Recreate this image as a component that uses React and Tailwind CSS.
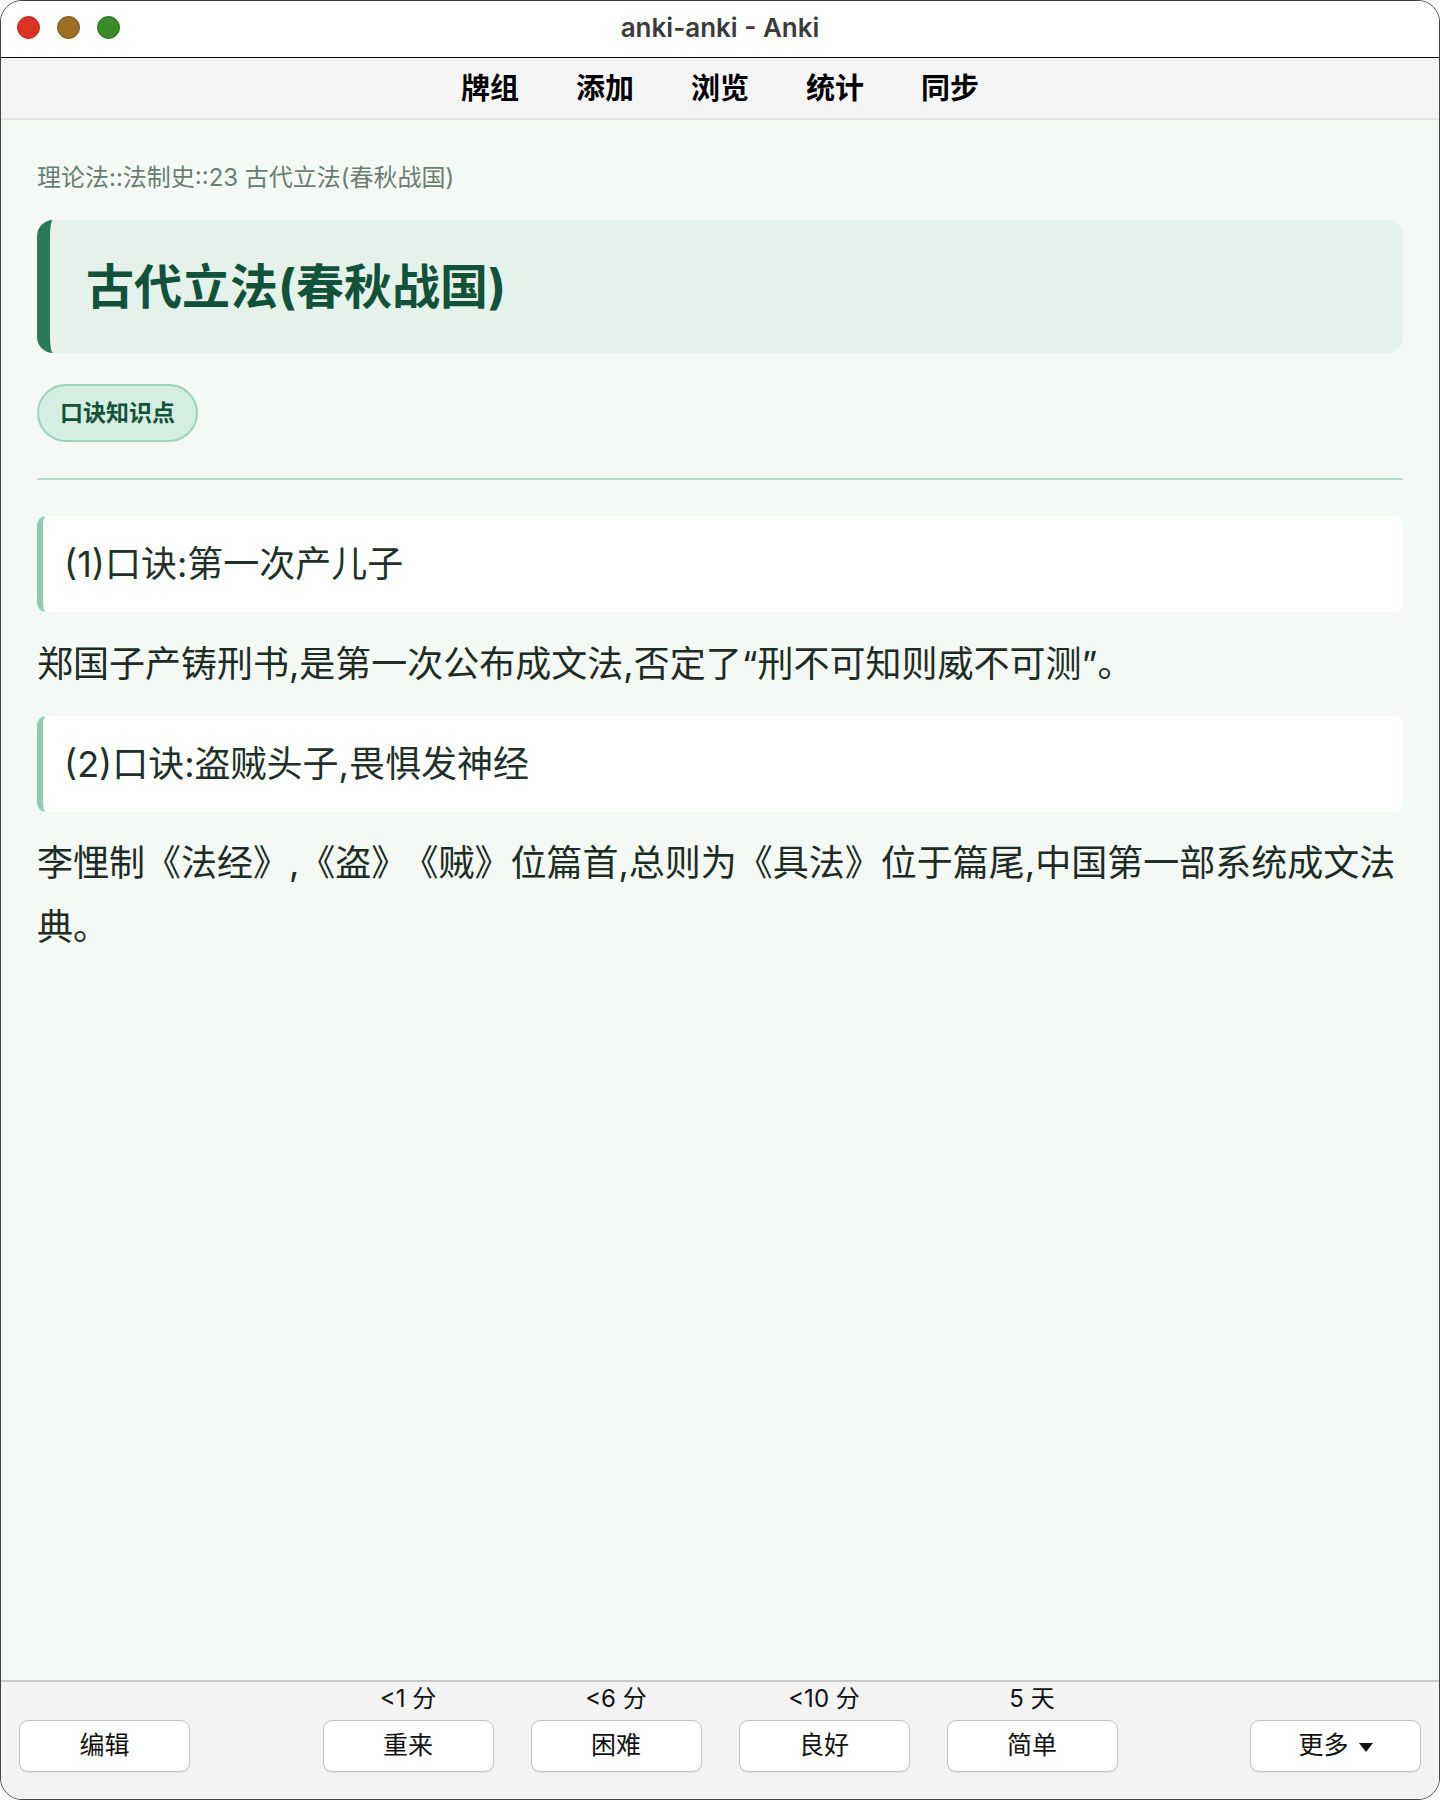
import React from "react";

const FONT = "font-['Inter','Noto_Sans_CJK_SC',sans-serif]";

function TrafficLights() {
  return (
    <div className="absolute left-[16px] top-[15px] flex gap-[17px]">
      <span className="block w-[23px] h-[23px] rounded-full bg-[#dc3327] border border-[#b32a1f]" />
      <span className="block w-[23px] h-[23px] rounded-full bg-[#9b6f24] border border-[#7a5216]" />
      <span className="block w-[23px] h-[23px] rounded-full bg-[#3a8a28] border border-[#2b6a1c]" />
    </div>
  );
}

function Btn({ children, className = "" }) {
  return (
    <button
      className={
        "h-[52px] w-[171px] rounded-[9px] bg-white border-[1.5px] border-[#c3c3c3] shadow-[0_1px_1px_rgba(0,0,0,0.08)] text-[25px] text-[#111] flex items-center justify-center " +
        className
      }
    >
      {children}
    </button>
  );
}

export default function App() {
  const answers = [
    ["<1 分", "重来"],
    ["<6 分", "困难"],
    ["<10 分", "良好"],
    ["5 天", "简单"],
  ];
  return (
    <div className={"w-[1440px] h-[1800px] bg-white " + FONT}>
      <div className="relative w-full h-full rounded-[22px] border border-[#444] overflow-hidden flex flex-col bg-[#f4f9f6]">
        {/* Title bar */}
        <div className="relative h-[57px] shrink-0 bg-white border-b-[1.5px] border-black flex items-center justify-center">
          <TrafficLights />
          <span className="text-[26px] font-semibold text-[#3b3b3b] -mt-[4px]">anki-anki - Anki</span>
        </div>
        {/* Nav */}
        <div className="h-[62px] shrink-0 bg-[#f5f5f5] border-b-2 border-[#e3e3e3] flex items-center justify-center gap-[57px] pt-[1px]">
          {["牌组", "添加", "浏览", "统计", "同步"].map((t) => (
            <span key={t} className="text-[29px] font-bold text-black leading-none">
              {t}
            </span>
          ))}
        </div>
        {/* Content */}
        <div className="flex-1 px-[36px] pt-[41px]">
          <div className="text-[24px] leading-[33px] text-[#6a7d73]">理论法::法制史::23 古代立法(春秋战国)</div>
          <div className="mt-[26px] h-[133px] rounded-[16px] bg-[#e4f2eb] border-l-[13px] border-[#2a7a5a] flex items-center pl-[36px]">
            <h1 className="text-[48px] font-bold text-[#13523a] leading-none">古代立法(春秋战国)</h1>
          </div>
          <div className="mt-[31px] inline-flex h-[58px] items-center rounded-full bg-[#d5eee2] border-2 border-[#9fd2ba] px-[21px]">
            <span className="text-[23px] font-bold text-[#13523a]">口诀知识点</span>
          </div>
          <div className="mt-[36px] h-[2px] bg-[#b9dbc9]" />
          <div className="mt-[36px] rounded-[9px] bg-white border-l-[6px] border-[#8ecbb0] pl-[21px] py-[16px] text-[36px] leading-[64px] text-[#23302a]">
            (1)口诀:第一次产儿子
          </div>
          <p className="mt-[20px] text-[36px] leading-[64px] text-[#1f2b25]">
            郑国子产铸刑书,是第一次公布成文法,否定了“刑不可知则威不可测”。
          </p>
          <div className="mt-[20px] rounded-[9px] bg-white border-l-[6px] border-[#8ecbb0] pl-[21px] py-[16px] text-[36px] leading-[64px] text-[#23302a]">
            (2)口诀:盗贼头子,畏惧发神经
          </div>
          <p className="mt-[19px] text-[36px] leading-[64px] text-[#1f2b25]">
            李悝制《法经》,《盗》<span className="ml-[13px]">《贼》</span>位篇首,总则为《具法》位于篇尾,中国第一部系统成文法典。
          </p>
        </div>
        {/* Bottom bar */}
        <div className="h-[119px] shrink-0 bg-[#f3f3f3] border-t-2 border-[#c9c9c9] flex items-start justify-between px-[18px] pt-[38px]">
          <Btn>编辑</Btn>
          <div className="flex gap-[37px] -mt-[38px]">
            {answers.map(([l, b]) => (
              <div key={b} className="flex flex-col items-center">
                <span className="h-[38px] flex items-center text-[24px] text-[#111] leading-none pb-[4px]">{l}</span>
                <Btn>{b}</Btn>
              </div>
            ))}
          </div>
          <Btn className="gap-[10px]">
            <span>更多</span>
            <span className="block w-0 h-0 border-l-[7px] border-r-[7px] border-t-[9px] border-l-transparent border-r-transparent border-t-[#111] mt-[3px]" />
          </Btn>
        </div>
      </div>
    </div>
  );
}
